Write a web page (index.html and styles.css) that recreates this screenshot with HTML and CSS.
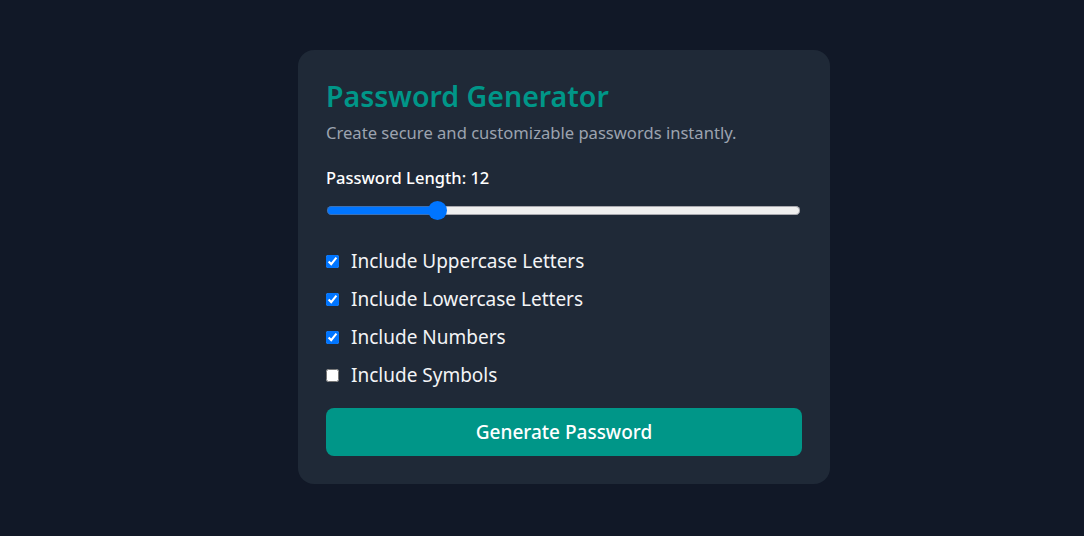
FILE: index.html
```html
<!DOCTYPE html>
<html lang="en">
<head>
<meta charset="utf-8">
<title>Password Generator</title>
<link rel="stylesheet" href="styles.css">
</head>
<body>
<main class="page">
  <section class="card">
    <h1 class="title">Password Generator</h1>
    <p class="subtitle">Create secure and customizable passwords instantly.</p>
    <label class="length-label" for="len">Password Length: <span>12</span></label>
    <input class="slider" id="len" type="range" min="4" max="40" value="12" style="--fill: 23.2%">
    <div class="options">
      <label class="option"><input type="checkbox" checked> Include Uppercase Letters</label>
      <label class="option"><input type="checkbox" checked> Include Lowercase Letters</label>
      <label class="option"><input type="checkbox" checked> Include Numbers</label>
      <label class="option"><input type="checkbox"> Include Symbols</label>
    </div>
    <button class="generate" type="button">Generate Password</button>
  </section>
</main>
</body>
</html>
```
FILE: styles.css
```css
html, body {
  margin: 0;
  height: 100%;
}
body {
  background: #111827;
  font-family: "Noto Sans", "Open Sans", sans-serif;
  color: #f3f4f6;
}
.page {
  min-height: 100%;
  display: flex;
  align-items: flex-start;
  justify-content: center;
  padding: 50px 0 0 44px;
  box-sizing: border-box;
}
.card {
  width: 532px;
  box-sizing: border-box;
  background: #1f2937;
  border-radius: 16px;
  padding: 28px;
  display: flex;
  flex-direction: column;
}
.title {
  margin: 0;
  font-size: 28.5px;
  font-weight: 600;
  color: #009688;
  line-height: 37px;
}
.subtitle {
  margin: 7px 0 0;
  font-size: 16.6px;
  line-height: 22px;
  color: #9ca3af;
}
.length-label {
  margin-top: 24px;
  font-size: 16.5px;
  font-weight: 500;
  line-height: 20px;
  color: #ffffff;
}
.slider {
  -webkit-appearance: none;
  appearance: none;
  width: calc(100% - 3px);
  height: 20px;
  margin: 12px 0 0 1px;
  padding: 0;
  background: transparent;
}
.slider::-webkit-slider-runnable-track {
  height: 9px;
  border-radius: 5px;
  background: linear-gradient(to right, #0075ff 0 var(--fill), #efefef var(--fill) 100%);
  box-shadow: inset 0 0 0 1px rgba(110, 110, 120, 0.55);
}
.slider::-webkit-slider-thumb {
  -webkit-appearance: none;
  appearance: none;
  width: 19px;
  height: 19px;
  margin-top: -5px;
  border-radius: 50%;
  background: #0075ff;
  border: none;
}
.options {
  margin-top: 29px;
  display: flex;
  flex-direction: column;
  gap: 13px;
}
.option {
  display: flex;
  align-items: center;
  gap: 12px;
  font-size: 19px;
  line-height: 25px;
  color: #f3f4f6;
}
.option input {
  margin: 0;
}
.generate {
  margin-top: 20px;
  height: 48px;
  border: none;
  border-radius: 8px;
  background: #009688;
  color: #ffffff;
  font-family: inherit;
  font-size: 19px;
  font-weight: 500;
}
```
